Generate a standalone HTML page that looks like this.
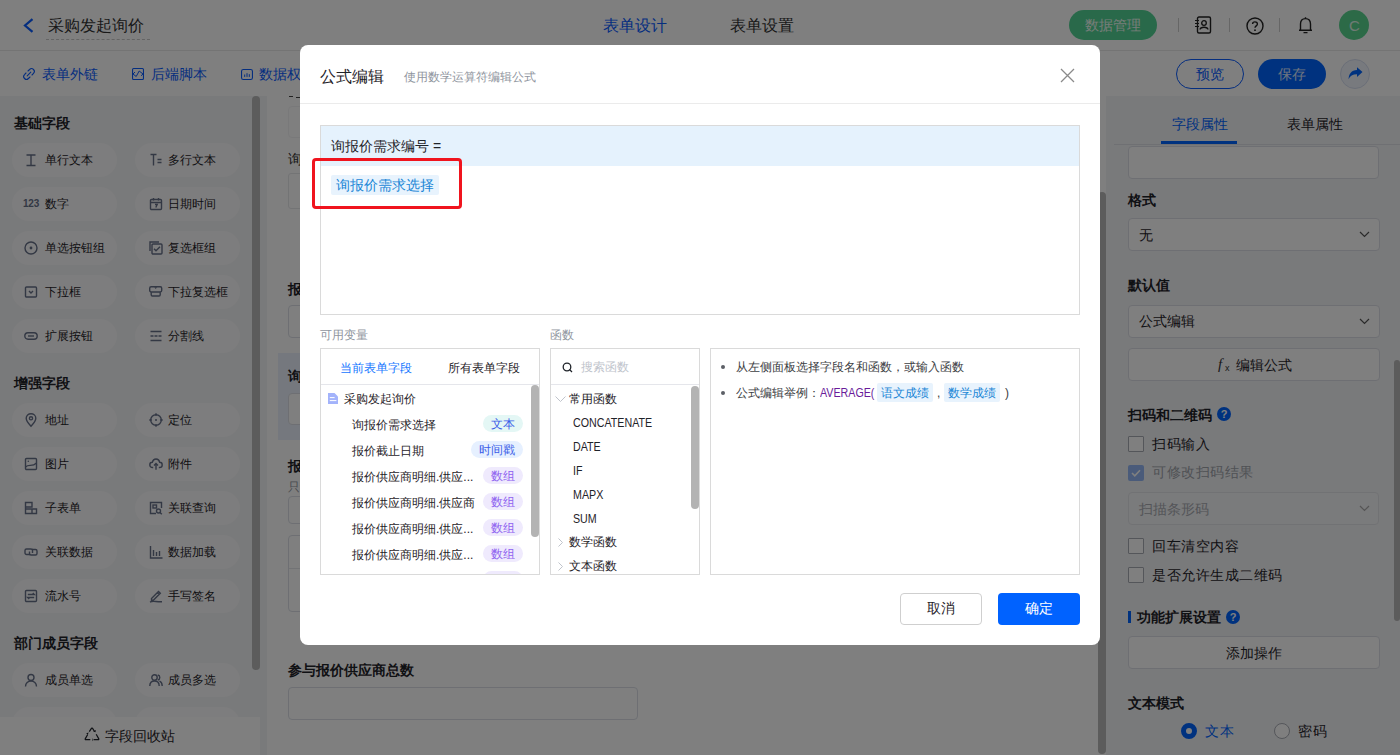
<!DOCTYPE html>
<html><head><meta charset="utf-8">
<style>
*{box-sizing:border-box;margin:0;padding:0}
html,body{width:1400px;height:755px;overflow:hidden;background:#fff;font-family:"Liberation Sans",sans-serif;color:#1f2329}
.a{position:absolute}
.t{position:absolute;white-space:nowrap;line-height:1}
svg{position:absolute;overflow:visible}
/* header */
#hdr{left:0;top:0;width:1400px;height:51px;background:#fff;border-bottom:1px solid #e8e8e8}
#tb{left:0;top:51px;width:1400px;height:45px;background:#fff}
#side{left:0;top:96px;width:267px;height:659px;background:#f3f4f7}
.sh{font-size:14px;font-weight:bold;color:#1f2329}
.chip{position:absolute;width:105px;height:34px;border-radius:17px;background:#fbfbfc}
.chip .tx{position:absolute;left:33px;top:10px;font-size:12px;line-height:14px;white-space:nowrap;color:#1f2329}
.chip svg{left:12px;top:10px}
.c2 .tx{left:33px}
.c2 svg{left:14px}
#canvas{left:267px;top:96px;width:839px;height:659px;background:#fff}
#rp{left:1106px;top:96px;width:294px;height:659px;background:#f3f4f7}
.lbl{font-size:14px;font-weight:bold;color:#1f2329}
.inp{position:absolute;background:#fff;border:1px solid #dcdfe6;border-radius:4px}
#mask{left:0;top:0;width:1400px;height:755px;background:rgba(0,0,0,.5)}
.tag{position:absolute;height:17px;border-radius:9px;font-size:12px;line-height:18px;text-align:center}
.fn{font-size:12px;color:#1f2329;transform:scaleX(.89);transform-origin:0 0}
#modal{left:300px;top:45px;width:800px;height:600px;background:#fff;border-radius:8px}
</style></head><body>
<!-- ============ underlying page ============ -->
<div id="hdr" class="a"></div>
<svg style="left:23px;top:18px" width="11" height="15" viewBox="0 0 11 15"><path d="M9.5 1.2 L2 7.5 L9.5 13.8" fill="none" stroke="#0a5cff" stroke-width="2.2"/></svg>
<div class="t" style="left:48px;top:18px;font-size:16px;color:#333">采购发起询价</div>
<div class="a" style="left:46px;top:39px;width:104px;border-top:1px dashed #c8c8c8"></div>
<div class="t" style="left:603px;top:18px;font-size:16px;color:#0a5cff">表单设计</div>
<div class="t" style="left:730px;top:18px;font-size:16px;color:#333">表单设置</div>
<div class="a" style="left:1069px;top:10px;width:88px;height:30px;border-radius:15px;background:#52d394"></div>
<div class="t" style="left:1085px;top:18px;font-size:14px;color:#fff;opacity:.9">数据管理</div>
<div class="a" style="left:1178px;top:18px;width:1px;height:14px;background:#ccc"></div>
<div class="a" style="left:1229px;top:18px;width:1px;height:14px;background:#ccc"></div>
<div class="a" style="left:1279px;top:18px;width:1px;height:14px;background:#ccc"></div>
<!-- contacts icon -->
<svg style="left:1194px;top:16px" width="18" height="18" viewBox="0 0 18 18"><rect x="3.5" y="1" width="13" height="16" rx="1.5" fill="none" stroke="#222" stroke-width="1.4"/><circle cx="10" cy="7" r="2.3" fill="none" stroke="#222" stroke-width="1.3"/><path d="M6 13.5 C6.5 10.5 13.5 10.5 14 13.5" fill="none" stroke="#222" stroke-width="1.3"/><path d="M1 4.5h4M1 7.5h4M1 10.5h4" stroke="#222" stroke-width="1.2"/></svg>
<!-- help icon -->
<svg style="left:1246px;top:17px" width="18" height="18" viewBox="0 0 18 18"><circle cx="9" cy="9" r="8" fill="none" stroke="#222" stroke-width="1.4"/><path d="M6.6 7 C6.6 4.2 11.4 4.2 11.4 7 C11.4 8.8 9 9 9 10.8" fill="none" stroke="#222" stroke-width="1.4"/><circle cx="9" cy="13.2" r=".9" fill="#222"/></svg>
<!-- bell -->
<svg style="left:1298px;top:16px" width="15" height="18" viewBox="0 0 15 18"><path d="M7.5 1.2v1.3M2.5 14 V8 C2.5 4.5 4.8 2.6 7.5 2.6 C10.2 2.6 12.5 4.5 12.5 8 V14 M1 14.3h13 M5.5 16.6h4" fill="none" stroke="#222" stroke-width="1.4"/></svg>
<div class="a" style="left:1339px;top:10px;width:30px;height:30px;border-radius:15px;background:#58d48f"></div>
<div class="t" style="left:1349px;top:18px;font-size:15px;color:#fff;opacity:.8">C</div>

<div id="tb" class="a"></div>
<svg style="left:23px;top:68px" width="12" height="12" viewBox="0 0 12 12"><path d="M5 3 L6.6 1.5 A2.7 2.7 0 0 1 10.5 5.4 L9 7 M7 9 L5.4 10.5 A2.7 2.7 0 0 1 1.5 6.6 L3 5 M4.2 7.8 L7.8 4.2" fill="none" stroke="#0a5cff" stroke-width="1.1" stroke-linecap="round"/></svg>
<div class="t" style="left:42px;top:67px;font-size:14px;color:#0a5cff">表单外链</div>
<svg style="left:132px;top:68px" width="12" height="12" viewBox="0 0 12 12"><rect x=".55" y=".55" width="10.9" height="10.9" rx="1" fill="none" stroke="#0a5cff" stroke-width="1.1"/><path d="M3 4L1 6l3.2 2.5L7.2 3 M7.2 3l3.8 3-2 1.8" fill="none" stroke="#0a5cff" stroke-width="1"/></svg>
<div class="t" style="left:151px;top:67px;font-size:14px;color:#0a5cff">后端脚本</div>
<svg style="left:241px;top:69px" width="12" height="11" viewBox="0 0 12 11"><rect x=".55" y=".55" width="10.9" height="9.9" rx="1.8" fill="none" stroke="#0a5cff" stroke-width="1.1"/><path d="M3.7 5.5v2.4M6 4.2v3.7M8.3 5.2v2.7" stroke="#0a5cff" stroke-width="1"/></svg>
<div class="t" style="left:259px;top:67px;font-size:14px;color:#0a5cff">数据权限</div>
<div class="a" style="left:1176px;top:59px;width:68px;height:30px;border-radius:15px;border:1px solid #0a5cff;background:#fff"></div>
<div class="t" style="left:1196px;top:67px;font-size:14px;color:#0a5cff">预览</div>
<div class="a" style="left:1258px;top:59px;width:68px;height:30px;border-radius:15px;background:#0064ff"></div>
<div class="t" style="left:1278px;top:67px;font-size:14px;color:#fff;opacity:.85">保存</div>
<div class="a" style="left:1340px;top:59px;width:30px;height:30px;border-radius:15px;border:1px solid #d6def0;background:#f0f4fc"></div>
<svg style="left:1348px;top:67px" width="15" height="13" viewBox="0 0 15 13"><path d="M14.5 5 L9 .3 V3 C3.5 3.2 .8 6.8 .6 12.2 C2 8.8 4.6 7.3 9 7.3 V10 Z" fill="#0064ff"/></svg>

<!-- sidebar -->
<div id="side" class="a">
<div class="t sh" style="left:14px;top:20px">基础字段</div>
<div class="chip" style="left:12px;top:47px"><svg width="14" height="14" viewBox="0 0 14 14"><path d="M2.5 2h9M7 2v10.5M2.5 12.5h9" fill="none" stroke="#667089" stroke-width="1.4"/></svg><div class="tx">单行文本</div></div>
<div class="chip c2" style="left:135px;top:47px"><svg width="14" height="14" viewBox="0 0 14 14"><path d="M1.5 1.5h6M4.5 1.5v11M8.5 6.5h4M8.5 9.5h4" fill="none" stroke="#667089" stroke-width="1.4"/></svg><div class="tx">多行文本</div></div>
<div class="chip" style="left:12px;top:91px"><div style="position:absolute;left:11px;top:11px;font-size:10px;font-weight:bold;color:#667089;line-height:12px;letter-spacing:-.2px">123</div><div class="tx">数字</div></div>
<div class="chip c2" style="left:135px;top:91px"><svg width="14" height="14" viewBox="0 0 14 14"><rect x="1.5" y="2.5" width="11" height="10" rx="1" fill="none" stroke="#667089" stroke-width="1.4"/><path d="M1.5 5.5h11M4.5 1v2.5M9.5 1v2.5M6 7.5h2.2L6.8 10.5" fill="none" stroke="#667089" stroke-width="1.4" stroke-width="1.1"/></svg><div class="tx">日期时间</div></div>
<div class="chip" style="left:12px;top:135px"><svg width="14" height="14" viewBox="0 0 14 14"><circle cx="7" cy="7" r="6" fill="none" stroke="#667089" stroke-width="1.4"/><circle cx="7" cy="7" r="1.4" fill="#667089"/></svg><div class="tx">单选按钮组</div></div>
<div class="chip c2" style="left:135px;top:135px"><svg width="14" height="14" viewBox="0 0 14 14"><path d="M1 10V1h9" fill="none" stroke="#667089" stroke-width="1.4"/><rect x="3" y="3" width="10" height="10" rx="1" fill="none" stroke="#667089" stroke-width="1.4"/><path d="M5 7.8l2 2 4-4" fill="none" stroke="#667089" stroke-width="1.4"/></svg><div class="tx">复选框组</div></div>
<div class="chip" style="left:12px;top:179px"><svg width="14" height="14" viewBox="0 0 14 14"><rect x="1.5" y="2" width="11" height="10" rx="1" fill="none" stroke="#667089" stroke-width="1.4"/><path d="M5 6l2 2 2-2" fill="none" stroke="#667089" stroke-width="1.4"/></svg><div class="tx">下拉框</div></div>
<div class="chip c2" style="left:135px;top:179px"><svg width="14" height="14" viewBox="0 0 14 14"><rect x=".7" y="1.8" width="12" height="5.2" rx="1.4" fill="none" stroke="#667089" stroke-width="1.4"/><path d="M2.2 7.2v2.6c0 .7.5 1.2 1.2 1.2h6.6c.7 0 1.2-.5 1.2-1.2V7.2" fill="none" stroke="#667089" stroke-width="1.4"/><path d="M5.3 2.2h2.8L6.7 4z" fill="#667089"/></svg><div class="tx">下拉复选框</div></div>
<div class="chip" style="left:12px;top:223px"><svg width="14" height="14" viewBox="0 0 14 14"><rect x=".8" y="3.8" width="12.4" height="6.4" rx="3.2" fill="none" stroke="#667089" stroke-width="1.4"/><path d="M4 7h6" fill="none" stroke="#667089" stroke-width="1.4"/></svg><div class="tx">扩展按钮</div></div>
<div class="chip c2" style="left:135px;top:223px"><svg width="14" height="14" viewBox="0 0 14 14"><path d="M1.5 2.5h11M1.5 11.5h11M1.5 7h3M5.5 7h3M9.5 7h3" fill="none" stroke="#667089" stroke-width="1.4"/></svg><div class="tx">分割线</div></div>
<div class="t sh" style="left:14px;top:280px">增强字段</div>
<div class="chip" style="left:12px;top:307px"><svg width="14" height="14" viewBox="0 0 14 14"><path d="M7 13.2C4 10 2.2 7.6 2.2 5.2 2.2 2.6 4.4.8 7 .8s4.8 1.8 4.8 4.4C11.8 7.6 10 10 7 13.2z" fill="none" stroke="#667089" stroke-width="1.4"/><circle cx="7" cy="5.3" r="1.6" fill="none" stroke="#667089" stroke-width="1.4"/></svg><div class="tx">地址</div></div>
<div class="chip c2" style="left:135px;top:307px"><svg width="14" height="14" viewBox="0 0 14 14"><circle cx="7" cy="7" r="5.3" fill="none" stroke="#667089" stroke-width="1.4"/><circle cx="7" cy="7" r="1" fill="#667089"/><path d="M7 .3v2.5M7 11.2v2.5M.3 7h2.5M11.2 7h2.5" fill="none" stroke="#667089" stroke-width="1.4"/></svg><div class="tx">定位</div></div>
<div class="chip" style="left:12px;top:351px"><svg width="14" height="14" viewBox="0 0 14 14"><rect x="1.5" y="1.5" width="11" height="11" rx="1" fill="none" stroke="#667089" stroke-width="1.4"/><path d="M1.5 10C5 6.5 8 10.5 12.5 6" fill="none" stroke="#667089" stroke-width="1.4"/><circle cx="4.3" cy="4.3" r=".8" fill="#667089"/></svg><div class="tx">图片</div></div>
<div class="chip c2" style="left:135px;top:351px"><svg width="14" height="14" viewBox="0 0 14 14"><path d="M4.2 10.5H3.5C1.9 10.5.8 9.3.8 7.9S1.9 5.3 3.3 5.3C3.8 3.2 5.2 2 7 2s3.3 1.2 3.7 3.3c1.5 0 2.5 1.2 2.5 2.6s-1.1 2.6-2.7 2.6H9.8" fill="none" stroke="#667089" stroke-width="1.4"/><path d="M7 12.8V6.8M5 8.6l2-2 2 2" fill="none" stroke="#667089" stroke-width="1.4"/></svg><div class="tx">附件</div></div>
<div class="chip" style="left:12px;top:395px"><svg width="14" height="14" viewBox="0 0 14 14"><path d="M1.5 1.5h6.5v4.5h-6.5zM1.5 6v6.5h11V8H8v4.5M1.5 8h6.5" fill="none" stroke="#667089" stroke-width="1.4"/></svg><div class="tx">子表单</div></div>
<div class="chip c2" style="left:135px;top:395px"><svg width="14" height="14" viewBox="0 0 14 14"><path d="M12.5 7V1.5h-11v11H7" fill="none" stroke="#667089" stroke-width="1.4"/><rect x="4" y="4" width="3.5" height="3" fill="none" stroke="#667089" stroke-width="1.4" stroke-width="1.1"/><circle cx="9.5" cy="10" r="2" fill="none" stroke="#667089" stroke-width="1.4" stroke-width="1.1"/><path d="M11 11.5l1.8 1.8" fill="none" stroke="#667089" stroke-width="1.4"/></svg><div class="tx">关联查询</div></div>
<div class="chip" style="left:12px;top:439px"><svg width="14" height="14" viewBox="0 0 14 14"><path d="M6 9.5H2.5c-.8 0-1.5-.7-1.5-1.5V5.5C1 4.7 1.7 4 2.5 4H7c.8 0 1.5.7 1.5 1.5V8" fill="none" stroke="#667089" stroke-width="1.4"/><path d="M8 4.5H11.5c.8 0 1.5.7 1.5 1.5v2.5c0 .8-.7 1.5-1.5 1.5H7c-.8 0-1.5-.7-1.5-1.5V6.5" fill="none" stroke="#667089" stroke-width="1.4"/></svg><div class="tx">关联数据</div></div>
<div class="chip c2" style="left:135px;top:439px"><svg width="14" height="14" viewBox="0 0 14 14"><path d="M1.5 1v12h12M4.5 5v6M7.5 7v4M10.5 6v5" fill="none" stroke="#667089" stroke-width="1.4"/></svg><div class="tx">数据加载</div></div>
<div class="chip" style="left:12px;top:483px"><svg width="14" height="14" viewBox="0 0 14 14"><rect x="1.5" y="1.5" width="11" height="11" rx="1" fill="none" stroke="#667089" stroke-width="1.4"/><path d="M3.8 5.5h6.5L8.8 4M10.2 8.5H3.7L5.2 10" fill="none" stroke="#667089" stroke-width="1.4" stroke-width="1.1"/></svg><div class="tx">流水号</div></div>
<div class="chip c2" style="left:135px;top:483px"><svg width="14" height="14" viewBox="0 0 14 14"><path d="M2.5 9.5L9.5 2.5l1.8 1.8-7 7H2.5z M8.3 3.7l1.8 1.8" fill="none" stroke="#667089" stroke-width="1.4"/><path d="M1 13c3-1.5 6 0 12-.3" fill="none" stroke="#667089" stroke-width="1.4"/></svg><div class="tx">手写签名</div></div>
<div class="t sh" style="left:14px;top:540px">部门成员字段</div>
<div class="chip" style="left:12px;top:567px"><svg width="14" height="14" viewBox="0 0 14 14"><circle cx="7" cy="4.5" r="3" fill="none" stroke="#667089" stroke-width="1.4"/><path d="M1.5 13.5c0-3.2 2.5-5.5 5.5-5.5s5.5 2.3 5.5 5.5" fill="none" stroke="#667089" stroke-width="1.4"/></svg><div class="tx">成员单选</div></div>
<div class="chip c2" style="left:135px;top:567px"><svg width="14" height="14" viewBox="0 0 14 14"><circle cx="5.5" cy="4.5" r="2.7" fill="none" stroke="#667089" stroke-width="1.4"/><path d="M.8 13c0-3 2-5 4.7-5s4.7 2 4.7 5M8.8 2c1.3.3 2 1.3 2 2.5s-.8 2.2-2 2.5M10.5 8.2c1.7.6 2.7 2.4 2.7 4.8" fill="none" stroke="#667089" stroke-width="1.4"/></svg><div class="tx">成员多选</div></div>
<div class="chip" style="left:12px;top:611px"><svg width="14" height="14" viewBox="0 0 14 14"><rect x="4.5" y="1" width="5" height="4" fill="none" stroke="#667089" stroke-width="1.4"/><path d="M2.5 13V9h9v4M7 5v4" fill="none" stroke="#667089" stroke-width="1.4"/></svg><div class="tx">部门单选</div></div>
<div class="chip c2" style="left:135px;top:611px"><svg width="14" height="14" viewBox="0 0 14 14"><rect x="4.5" y="1" width="5" height="4" fill="none" stroke="#667089" stroke-width="1.4"/><path d="M2.5 13V9h9v4M7 5v4" fill="none" stroke="#667089" stroke-width="1.4"/></svg><div class="tx">部门多选</div></div>
<div class="a" style="left:252px;top:0;width:8px;height:574px;border-radius:4px;background:#b8b8b8"></div>
<div class="a" style="left:0;top:621px;width:260px;height:38px;background:#fff"></div>
<svg style="left:84px;top:631px" width="16" height="15" viewBox="0 0 16 15"><g fill="none" stroke="#1f2329" stroke-width="1.2" stroke-linejoin="round"><path d="M5.3 4.6L7.6 1.2c.2-.3.6-.3.8 0l2.3 3.6"/><path d="M12.2 7.3l2.6 4.6c.2.4-.1.8-.5.8H10"/><path d="M6.3 12.7H1.7c-.4 0-.7-.4-.5-.8l2.5-4.4"/></g><path d="M9.2 4.3l2.3.9.3-2.3zM8.5 11.2l1.2 1.5-1.2 1.5zM2.2 6.2l1.5 1.6 1-2.2z" fill="#1f2329"/></svg>
<div class="t" style="left:105px;top:633px;font-size:14px;color:#1f2329">字段回收站</div>
</div>

<!-- canvas -->
<div id="canvas" class="a"></div>

<!-- right panel -->
<div id="rp" class="a"></div>
<!-- canvas content (absolute coords relative to page) -->
<div class="a" style="left:289px;top:96px;width:4px;height:1px;background:#444"></div><div class="a" style="left:296px;top:97px;width:4px;height:1px;background:#444"></div>
<div class="inp" style="left:288px;top:106px;width:350px;height:32px;border-color:#f2f3f5"></div>
<div class="t" style="left:288px;top:152px;font-size:14px;color:#333">询报价需求编号</div>
<div class="inp" style="left:288px;top:173px;width:350px;height:36px;border-radius:3px;border-color:#e6e8eb"></div>
<div class="t lbl" style="left:288px;top:282px">报价截止日期</div>
<div class="inp" style="left:288px;top:305px;width:350px;height:33px"></div>
<div class="a" style="left:278px;top:353px;width:820px;height:87px;background:#eaf1fd"></div>
<div class="t lbl" style="left:288px;top:369px">询报价需求编号</div>
<div class="inp" style="left:288px;top:393px;width:350px;height:32px"></div>
<div class="t lbl" style="left:288px;top:459px">报价供应商明细</div>
<div class="t" style="left:288px;top:481px;font-size:12px;color:#8f959e">只读</div>
<div class="inp" style="left:288px;top:496px;width:350px;height:28px"></div>
<div class="inp" style="left:288px;top:535px;width:790px;height:77px"></div>
<div class="a" style="left:289px;top:568px;width:789px;height:1px;background:#e5e6eb"></div>
<div class="t lbl" style="left:288px;top:663px">参与报价供应商总数</div>
<div class="inp" style="left:288px;top:687px;width:350px;height:33px"></div>
<div class="a" style="left:1098px;top:192px;width:8px;height:562px;border-radius:4px;background:#b8b8b8"></div>

<!-- right panel content -->
<div class="t" style="left:1172px;top:117px;font-size:14px;color:#0064ff">字段属性</div>
<div class="t" style="left:1287px;top:117px;font-size:14px;color:#1f2329">表单属性</div>
<div class="a" style="left:1114px;top:144px;width:286px;height:1px;background:#dfe1e6"></div>
<div class="a" style="left:1161px;top:141px;width:76px;height:3px;background:#0064ff"></div>
<div class="inp" style="left:1128px;top:146px;width:251px;height:33px"></div>
<div class="t lbl" style="left:1128px;top:193px">格式</div>
<div class="inp" style="left:1128px;top:218px;width:252px;height:33px"></div>
<div class="t" style="left:1139px;top:228px;font-size:14px;color:#1f2329">无</div>
<svg style="left:1359px;top:231px" width="11" height="7" viewBox="0 0 11 7"><path d="M1 1l4.5 4.5L10 1" fill="none" stroke="#555" stroke-width="1.2"/></svg>
<div class="t lbl" style="left:1128px;top:278px">默认值</div>
<div class="inp" style="left:1128px;top:305px;width:252px;height:33px"></div>
<div class="t" style="left:1139px;top:314px;font-size:14px;color:#1f2329">公式编辑</div>
<svg style="left:1359px;top:318px" width="11" height="7" viewBox="0 0 11 7"><path d="M1 1l4.5 4.5L10 1" fill="none" stroke="#555" stroke-width="1.2"/></svg>
<div class="inp" style="left:1128px;top:348px;width:252px;height:33px"></div>
<div class="t" style="left:1218px;top:357px;font-size:15px;color:#333;font-family:'Liberation Serif',serif;font-style:italic">f</div><div class="t" style="left:1225px;top:364px;font-size:9px;color:#333">x</div>
<div class="t" style="left:1236px;top:358px;font-size:14px;color:#1f2329">编辑公式</div>
<div class="t lbl" style="left:1128px;top:408px">扫码和二维码</div>
<div class="a" style="left:1217px;top:407px;width:14px;height:14px;border-radius:7px;background:#0064ff;color:#fff;font-size:11px;font-weight:bold;line-height:14px;text-align:center">?</div>
<div class="a" style="left:1128px;top:436px;width:16px;height:16px;border:1px solid #a9adb5;border-radius:1px;background:#fff"></div>
<div class="t" style="left:1152px;top:437px;font-size:14px;letter-spacing:.5px;color:#1f2329">扫码输入</div>
<div class="a" style="left:1128px;top:465px;width:16px;height:16px;border-radius:2px;background:#94b7f5"></div>
<svg style="left:1131px;top:469px" width="10" height="8" viewBox="0 0 10 8"><path d="M1 4l2.8 2.8L9 1.2" fill="none" stroke="#fff" stroke-width="1.6"/></svg>
<div class="t" style="left:1152px;top:465px;font-size:14px;letter-spacing:.5px;color:#a0a4ab">可修改扫码结果</div>
<div class="inp" style="left:1128px;top:492px;width:251px;height:33px;background:#f5f6f8;border-color:#e3e5e9"></div>
<div class="t" style="left:1139px;top:502px;font-size:14px;color:#a8abb2">扫描条形码</div>
<svg style="left:1359px;top:505px" width="11" height="7" viewBox="0 0 11 7"><path d="M1 1l4.5 4.5L10 1" fill="none" stroke="#aaa" stroke-width="1.2"/></svg>
<div class="a" style="left:1128px;top:538px;width:16px;height:16px;border:1px solid #a9adb5;border-radius:1px;background:#fff"></div>
<div class="t" style="left:1152px;top:539px;font-size:14px;letter-spacing:.5px;color:#1f2329">回车清空内容</div>
<div class="a" style="left:1128px;top:567px;width:16px;height:16px;border:1px solid #a9adb5;border-radius:1px;background:#fff"></div>
<div class="t" style="left:1152px;top:568px;font-size:14px;letter-spacing:.5px;color:#1f2329">是否允许生成二维码</div>
<div class="a" style="left:1128px;top:611px;width:3px;height:12px;background:#0064ff"></div>
<div class="t lbl" style="left:1137px;top:610px">功能扩展设置</div>
<div class="a" style="left:1226px;top:610px;width:14px;height:14px;border-radius:7px;background:#0064ff;color:#fff;font-size:11px;font-weight:bold;line-height:14px;text-align:center">?</div>
<div class="inp" style="left:1128px;top:636px;width:252px;height:33px"></div>
<div class="t" style="left:1226px;top:646px;font-size:14px;color:#1f2329">添加操作</div>
<div class="t lbl" style="left:1128px;top:696px">文本模式</div>
<div class="a" style="left:1181px;top:723px;width:16px;height:16px;border-radius:8px;border:5px solid #0064ff;background:#fff"></div>
<div class="t" style="left:1205px;top:724px;font-size:14px;letter-spacing:.5px;color:#0064ff">文本</div>
<div class="a" style="left:1274px;top:723px;width:16px;height:16px;border-radius:8px;border:1px solid #a9adb5;background:#fff"></div>
<div class="t" style="left:1298px;top:724px;font-size:14px;letter-spacing:.5px;color:#1f2329">密码</div>
<div class="a" style="left:1394px;top:360px;width:6px;height:261px;border-radius:3px;background:#b8b8b8"></div>


<!-- ============ mask ============ -->
<div id="mask" class="a"></div>

<!-- ============ modal ============ -->
<div id="modal" class="a">
  <div class="t" style="left:20px;top:24px;font-size:16px;color:#1f2329">公式编辑</div>
  <div class="t" style="left:104px;top:26px;font-size:12px;color:#8f959e">使用数学运算符编辑公式</div>
  <svg style="left:760px;top:23px" width="15" height="15" viewBox="0 0 15 15"><path d="M1 1l13 13M14 1L1 14" stroke="#8a8a8a" stroke-width="1.3"/></svg>
  <div class="a" style="left:0;top:58px;width:800px;height:1px;background:#ebebeb"></div>
  <!-- formula box -->
  <div class="a" style="left:20px;top:80px;width:760px;height:190px;border:1px solid #dadada"></div>
  <div class="a" style="left:21px;top:81px;width:758px;height:40px;background:#e5f2fd"></div>
  <div class="t" style="left:31px;top:94px;font-size:14px;color:#1f2329">询报价需求编号 =</div>
  <div class="a" style="left:31px;top:130px;width:108px;height:20px;background:#e8f3fd;border-radius:2px"></div>
  <div class="t" style="left:36px;top:133px;font-size:14px;color:#1a86d6">询报价需求选择</div>
  <div class="a" style="left:12px;top:113px;width:150px;height:51px;border:3px solid #f0141e;border-radius:4px"></div>
  <!-- variables -->
  <div class="t" style="left:20px;top:284px;font-size:12px;color:#8f959e">可用变量</div>
  <div class="a" style="left:20px;top:303px;width:220px;height:227px;border:1px solid #dadada"></div>
  <div class="t" style="left:40px;top:317px;font-size:12px;color:#1677ff">当前表单字段</div>
  <div class="t" style="left:148px;top:317px;font-size:12px;color:#1f2329">所有表单字段</div>
  <div class="a" style="left:21px;top:339px;width:218px;height:1px;background:#e5e6eb"></div>
  <svg style="left:28px;top:348px" width="10" height="11" viewBox="0 0 10 11"><path d="M0 0h6.5L10 3.5V11H0z" fill="#a3b3fb"/><path d="M1.8 4.6h4.8M1.8 7.6h6.6" stroke="#fff" stroke-width="1"/></svg>
  <div class="t" style="left:44px;top:348px;font-size:12px;color:#1f2329">采购发起询价</div>
  <div class="t" style="left:52px;top:374px;font-size:12px;color:#1f2329">询报价需求选择</div>
  <div class="a tag" style="left:183px;top:370px;width:40px;background:#e4f7f5;color:#3b5ee8">文本</div>
  <div class="t" style="left:52px;top:400px;font-size:12px;color:#1f2329">报价截止日期</div>
  <div class="a tag" style="left:171px;top:396px;width:52px;background:#e6f0ff;color:#3b5ee8">时间戳</div>
  <div class="t" style="left:52px;top:426px;font-size:12px;color:#1f2329">报价供应商明细.供应...</div>
  <div class="a tag" style="left:183px;top:422px;width:40px;background:#efeafd;color:#8e62f0">数组</div>
  <div class="t" style="left:52px;top:452px;font-size:12px;color:#1f2329">报价供应商明细.供应商</div>
  <div class="a tag" style="left:183px;top:448px;width:40px;background:#efeafd;color:#8e62f0">数组</div>
  <div class="t" style="left:52px;top:478px;font-size:12px;color:#1f2329">报价供应商明细.供应...</div>
  <div class="a tag" style="left:183px;top:474px;width:40px;background:#efeafd;color:#8e62f0">数组</div>
  <div class="t" style="left:52px;top:504px;font-size:12px;color:#1f2329">报价供应商明细.供应...</div>
  <div class="a tag" style="left:183px;top:500px;width:40px;background:#efeafd;color:#8e62f0">数组</div>
  <div class="a" style="left:21px;top:526px;width:218px;height:3px;overflow:hidden"><div class="a tag" style="left:162px;top:0;width:40px;background:#efeafd"></div></div>
  <div class="a" style="left:231px;top:340px;width:8px;height:152px;border-radius:4px;background:#b3b3b3"></div>
  <!-- functions -->
  <div class="t" style="left:250px;top:284px;font-size:12px;color:#8f959e">函数</div>
  <div class="a" style="left:250px;top:303px;width:150px;height:227px;border:1px solid #dadada"></div>
  <svg style="left:262px;top:317px" width="11" height="11" viewBox="0 0 11 11"><circle cx="5" cy="5" r="3.8" fill="none" stroke="#1f2329" stroke-width="1.3"/><path d="M7.6 7.6l2.4 2.4" stroke="#1f2329" stroke-width="1.3"/></svg>
  <div class="t" style="left:281px;top:316px;font-size:12px;color:#c0c4cc">搜索函数</div>
  <div class="a" style="left:251px;top:339px;width:148px;height:1px;background:#e5e6eb"></div>
  <svg style="left:255px;top:351px" width="11" height="6" viewBox="0 0 11 6"><path d="M.5.5l5 5 5-5" fill="none" stroke="#c0c4cc" stroke-width="1"/></svg>
  <div class="t" style="left:269px;top:348px;font-size:12px;color:#1f2329">常用函数</div>
  <div class="t fn" style="left:273px;top:372px">CONCATENATE</div>
  <div class="t fn" style="left:273px;top:396px">DATE</div>
  <div class="t fn" style="left:273px;top:420px">IF</div>
  <div class="t fn" style="left:273px;top:444px">MAPX</div>
  <div class="t fn" style="left:273px;top:468px">SUM</div>
  <svg style="left:258px;top:493px" width="5" height="9" viewBox="0 0 5 9"><path d="M.5.5l4 4-4 4" fill="none" stroke="#c0c4cc" stroke-width="1"/></svg>
  <div class="t" style="left:269px;top:491px;font-size:12px;color:#1f2329">数学函数</div>
  <svg style="left:258px;top:517px" width="5" height="9" viewBox="0 0 5 9"><path d="M.5.5l4 4-4 4" fill="none" stroke="#c0c4cc" stroke-width="1"/></svg>
  <div class="t" style="left:269px;top:515px;font-size:12px;color:#1f2329;height:14px;overflow:hidden">文本函数</div>
  <div class="a" style="left:391px;top:341px;width:8px;height:123px;border-radius:4px;background:#b3b3b3"></div>
  <!-- help -->
  <div class="a" style="left:410px;top:303px;width:370px;height:227px;border:1px solid #dadada"></div>
  <div class="a" style="left:421px;top:320px;width:4px;height:4px;border-radius:2px;background:#5c5f66"></div>
  <div class="t" style="left:436px;top:316px;font-size:12px;color:#3c4043">从左侧面板选择字段名和函数，或输入函数</div>
  <div class="a" style="left:421px;top:346px;width:4px;height:4px;border-radius:2px;background:#5c5f66"></div>
  <div class="t" style="left:436px;top:342px;font-size:12px;color:#3c4043">公式编辑举例：<span style="color:#6a1b9a;display:inline-block;transform:scaleX(.89);transform-origin:0 0">AVERAGE(</span></div>
  <div class="a" style="left:577px;top:338px;width:56px;height:19px;border-radius:2px;background:#e8f3fd"></div>
  <div class="t" style="left:581px;top:342px;font-size:12px;color:#1a86d6">语文成绩</div>
  <div class="t" style="left:637px;top:342px;font-size:12px;color:#3c4043">,</div>
  <div class="a" style="left:644px;top:338px;width:56px;height:19px;border-radius:2px;background:#e8f3fd"></div>
  <div class="t" style="left:648px;top:342px;font-size:12px;color:#1a86d6">数学成绩</div>
  <div class="t" style="left:705px;top:342px;font-size:12px;color:#3c4043">)</div>
  <!-- buttons -->
  <div class="a" style="left:600px;top:548px;width:82px;height:32px;border:1px solid #cfcfcf;border-radius:4px;background:#fff"></div>
  <div class="t" style="left:627px;top:556px;font-size:14px;color:#1f2329">取消</div>
  <div class="a" style="left:698px;top:548px;width:82px;height:32px;border-radius:4px;background:#0062ff"></div>
  <div class="t" style="left:725px;top:556px;font-size:14px;color:#fff">确定</div>
</div>
</body></html>
